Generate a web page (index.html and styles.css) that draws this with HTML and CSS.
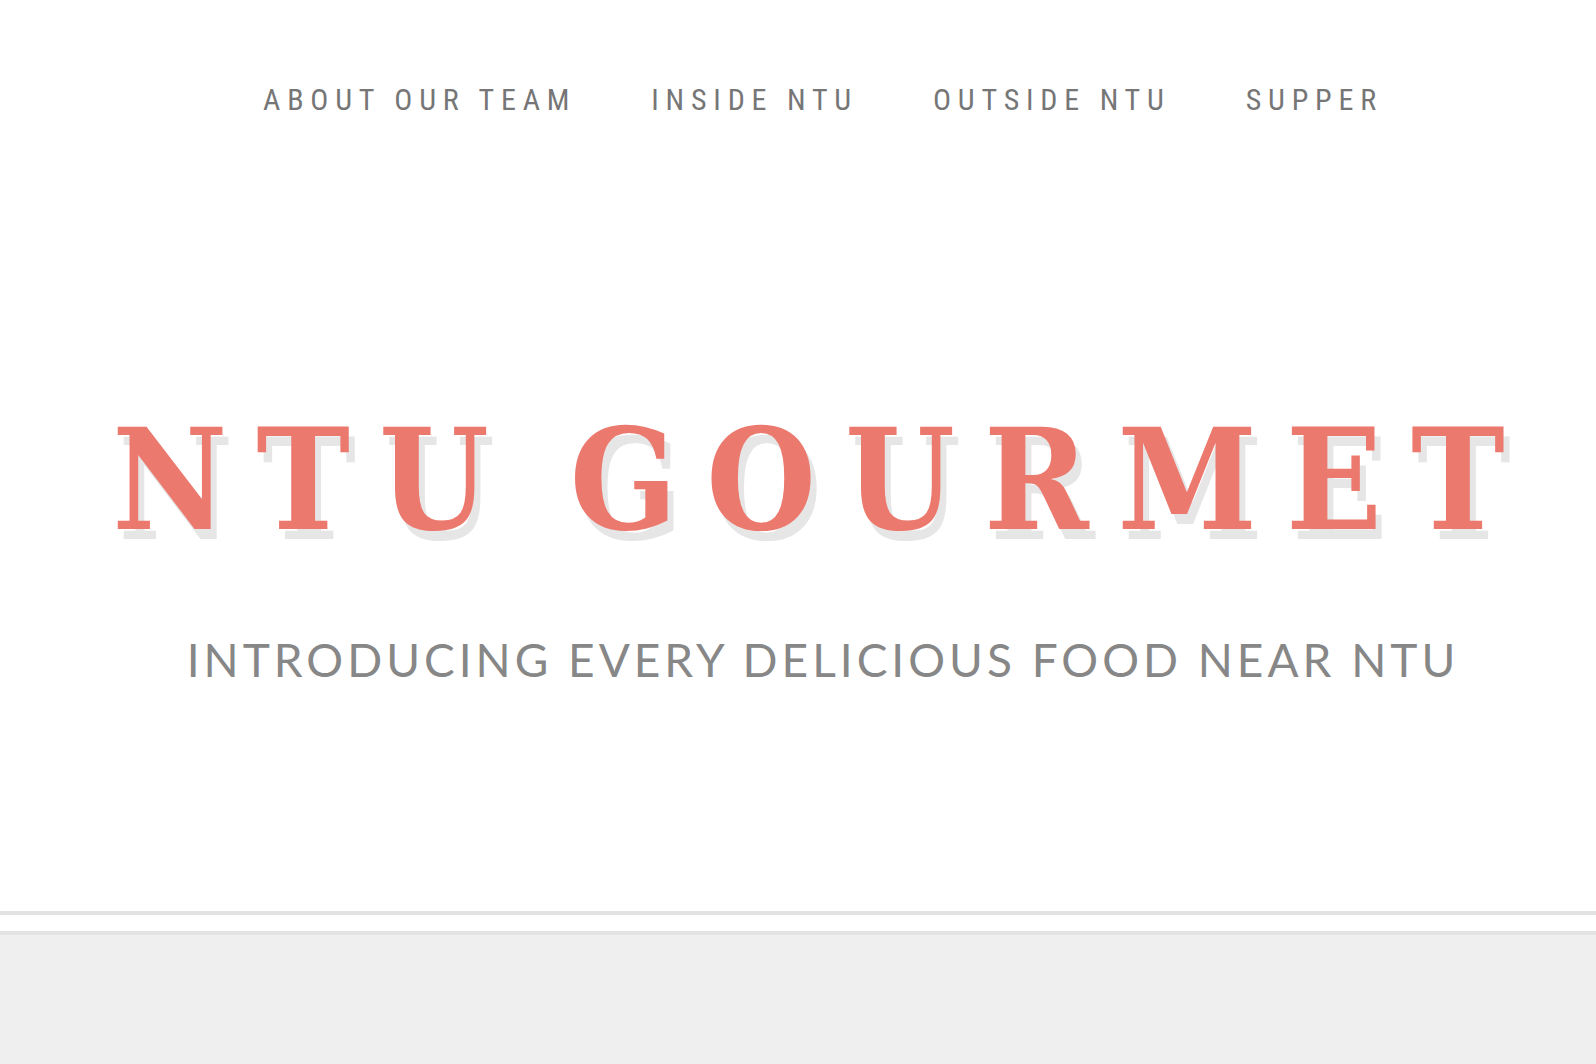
FILE: index.html
```html
<!DOCTYPE html>
<html lang="en">
<head>
<meta charset="utf-8">
<title>NTU Gourmet</title>
<link rel="stylesheet" href="styles.css">
</head>
<body>
<header class="site-header">
  <nav class="main-nav">
    <a class="nav-link" href="#">ABOUT OUR TEAM</a>
    <a class="nav-link" href="#">INSIDE NTU</a>
    <a class="nav-link" href="#">OUTSIDE NTU</a>
    <a class="nav-link" href="#">SUPPER</a>
  </nav>
  <div class="hero">
    <h1 class="hero-title">NTU GOURMET</h1>
    <p class="hero-subtitle">INTRODUCING EVERY DELICIOUS FOOD NEAR NTU</p>
  </div>
</header>
<div class="spacer"></div>
<main class="content"></main>
</body>
</html>
```
FILE: styles.css
```css
html, body {
  margin: 0;
  padding: 0;
  background: #ffffff;
}
body {
  min-height: 1064px;
  display: flex;
  flex-direction: column;
}
.site-header {
  padding: 85px 0 228px 50px;
  border-bottom: 4px solid #e3e3e3;
  background: #ffffff;
}
.main-nav {
  display: flex;
  justify-content: center;
  gap: 75px;
}
.nav-link {
  font-family: "Roboto Condensed", "Roboto", sans-serif;
  font-size: 30px;
  line-height: 30px;
  letter-spacing: 6.8px;
  color: #767676;
  text-decoration: none;
}
.hero {
  margin-top: 295px;
  text-align: center;
}
.hero-title {
  margin: 0;
  font-family: "DejaVu Serif Condensed", "DejaVu Serif", serif;
  font-weight: bold;
  font-size: 140px;
  line-height: 140px;
  letter-spacing: 29px;
  word-spacing: -21px;
  color: #ec796e;
  text-shadow: 6px 10px 0 #e6e6e6;
}
.hero-subtitle {
  margin: 87px 0 0;
  font-family: "Lato", "Noto Sans", sans-serif;
  font-size: 46px;
  line-height: 46px;
  letter-spacing: 4px;
  color: #878787;
}
.spacer {
  height: 16px;
  background: #ffffff;
}
.content {
  flex: 1;
  border-top: 4px solid #e3e3e3;
  background: #efefef;
}
```
